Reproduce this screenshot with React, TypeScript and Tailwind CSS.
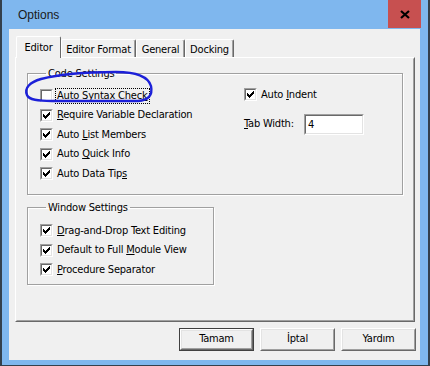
import React from "react";

const FONT = "font-['DejaVu_Sans_Condensed','Liberation_Sans',sans-serif]";

function Check() {
  const cols: [number, number][] = [
    [1, 3],
    [2, 4],
    [3, 5],
    [4, 4],
    [5, 3],
    [6, 2],
    [7, 1],
  ];
  return (
    <svg width="9" height="9" viewBox="0 0 9 9" shapeRendering="crispEdges" className="block">
      {cols.map(([x, y]) => (
        <rect key={x} x={x} y={y} width={1} height={3} fill="#000" />
      ))}
    </svg>
  );
}

function Box({ checked }: { checked: boolean }) {
  return (
    <span className="block w-[13px] h-[13px] shrink-0 border border-t-[#a0a0a0] border-l-[#a0a0a0] border-b-white border-r-white">
      <span className="block w-[11px] h-[11px] border border-t-[#696969] border-l-[#696969] border-b-[#e3e3e3] border-r-[#e3e3e3] bg-white">
        {checked && <Check />}
      </span>
    </span>
  );
}

function Item({
  checked,
  children,
  focus,
}: {
  checked: boolean;
  children: React.ReactNode;
  focus?: boolean;
}) {
  return (
    <div className="flex items-center h-[19.5px]">
      <Box checked={checked} />
      {focus ? (
        <span className="ml-[3px] px-[1px] leading-[14px] outline outline-1 outline-dotted outline-black">
          {children}
        </span>
      ) : (
        <span className="ml-[4px] leading-[14px]">{children}</span>
      )}
    </div>
  );
}

function Tab({ label, w, selected }: { label: string; w: string; selected?: boolean }) {
  if (selected) {
    return (
      <div
        className={`${w} h-[22px] -mb-[1px] relative z-10 bg-[#f0f0f0] border-t border-l border-r border-t-white border-l-white border-r-[#696969] rounded-t-[2px] flex items-start justify-center pt-[3px]`}
      >
        {label}
      </div>
    );
  }
  return (
    <div
      className={`${w} h-[18px] bg-[#f0f0f0] border-t border-l border-r border-t-white border-l-white border-r-[#696969] rounded-t-[2px] shadow-[inset_-1px_0_0_#a0a0a0] flex items-start justify-center pt-[2px]`}
    >
      {label}
    </div>
  );
}

function Button({ label, def }: { label: string; def?: boolean }) {
  return (
    <div className={`w-[75px] h-[23px] ${def ? "border border-[#404040]" : ""}`}>
      <div className="w-full h-full border border-t-white border-l-white border-b-[#696969] border-r-[#696969]">
        <div className="w-full h-full border border-t-[#e3e3e3] border-l-[#e3e3e3] border-b-[#a0a0a0] border-r-[#a0a0a0] bg-[#f0f0f0] flex items-center justify-center">
          {label}
        </div>
      </div>
    </div>
  );
}

export default function App() {
  return (
    <div
      className={`relative w-[430px] h-[366px] bg-[#7fb7ee] border-l-2 border-r-2 border-b border-[#34404c] flex flex-col text-[11px] tracking-[-0.2px] text-black ${FONT}`}
    >
      {/* title bar */}
      <div className="flex h-[29px] shrink-0">
        <div className="pl-[16px] pt-[6px] text-[12px] tracking-normal text-[#1a1a1a] font-['Liberation_Sans',sans-serif] flex-1">
          Options
        </div>
        <div className="w-[33px] h-[28px] mr-[7px] bg-[#c75050] flex items-center justify-center">
          <svg width="10" height="9" viewBox="0 0 10 9">
            <path d="M1 1 L9 8 M9 1 L1 8" stroke="#000" strokeWidth="2.2" />
          </svg>
        </div>
      </div>

      {/* client */}
      <div className="ml-[7px] mr-[8px] h-[331px] bg-[#f0f0f0] flex flex-col">
        {/* tabs */}
        <div className="flex items-end h-[21px] mt-[7px] ml-[7px]">
          <Tab label="Editor" w="w-[45px]" selected />
          <Tab label="Editor Format" w="w-[75px]" />
          <Tab label="General" w="w-[49px]" />
          <Tab label="Docking" w="w-[49px]" />
        </div>

        {/* panel */}
        <div className="ml-[6px] w-[400px] h-[265px] border border-t-white border-l-white border-b-[#696969] border-r-[#696969]">
          <div className="w-full h-full border border-t-[#f0f0f0] border-l-[#f0f0f0] border-b-[#a0a0a0] border-r-[#a0a0a0] pl-[10px] pt-[8px] flex flex-col">
            {/* Code Settings */}
            <fieldset className="w-[376px] h-[128px] border border-[#a0a0a0] shadow-[inset_1px_1px_0_#fff,1px_1px_0_#fff] pl-[12px] pr-0 pb-0 pt-[6px] m-0">
              <legend className="ml-[6px] px-[2px] leading-[13px]">Code Settings</legend>
              <div className="flex">
                <div className="w-[204px] flex flex-col">
                  <Item checked={false} focus>
                    Auto Syntax Chec<u>k</u>
                  </Item>
                  <Item checked>
                    <u>R</u>equire Variable Declaration
                  </Item>
                  <Item checked>
                    Auto <u>L</u>ist Members
                  </Item>
                  <Item checked>
                    Auto <u>Q</u>uick Info
                  </Item>
                  <Item checked>
                    Auto Data Tip<u>s</u>
                  </Item>
                </div>
                <div className="flex flex-col">
                  <div className="-mt-[1px]">
                    <Item checked>
                      Auto <u>I</u>ndent
                    </Item>
                  </div>
                  <div className="flex items-center mt-[9px]">
                    <span className="w-[60px] leading-[14px]">
                      <u>T</u>ab Width:
                    </span>
                    <div className="w-[60px] h-[21px] border border-t-[#a0a0a0] border-l-[#a0a0a0] border-b-white border-r-white">
                      <div className="w-full h-full border border-t-[#696969] border-l-[#696969] border-b-[#e3e3e3] border-r-[#e3e3e3] bg-white pl-[2px] leading-[17px]">
                        4
                      </div>
                    </div>
                  </div>
                </div>
              </div>
            </fieldset>

            {/* Window Settings */}
            <fieldset className="mt-[6px] w-[187px] h-[84px] border border-[#a0a0a0] shadow-[inset_1px_1px_0_#fff,1px_1px_0_#fff] pl-[12px] pr-0 pb-0 pt-[7px] m-0">
              <legend className="ml-[6px] px-[2px] leading-[13px]">Window Settings</legend>
              <Item checked>
                <u>D</u>rag-and-Drop Text Editing
              </Item>
              <Item checked>
                Default to Full <u>M</u>odule View
              </Item>
              <Item checked>
                <u>P</u>rocedure Separator
              </Item>
            </fieldset>
          </div>
        </div>

        {/* buttons */}
        <div className="flex justify-end gap-[6px] mt-[6px] pr-[4px]">
          <Button label="Tamam" def />
          <Button label="İptal" />
          <Button label="Yardım" />
        </div>
      </div>

      {/* hand-drawn annotation */}
      <svg
        className="absolute left-[-2px] top-0 pointer-events-none"
        width="430"
        height="366"
        viewBox="0 0 430 366"
      >
        <path
          d="M27 95 C24 88 30 82 41 79 C60 74 92 72 116 72 C136 72 148 76 151 86 C153 96 148 100 138 101 L52 101 C38 101 29 100 27 95 Z"
          fill="none"
          stroke="#1c20d8"
          strokeWidth="2.4"
          strokeLinecap="round"
        />
      </svg>
    </div>
  );
}
